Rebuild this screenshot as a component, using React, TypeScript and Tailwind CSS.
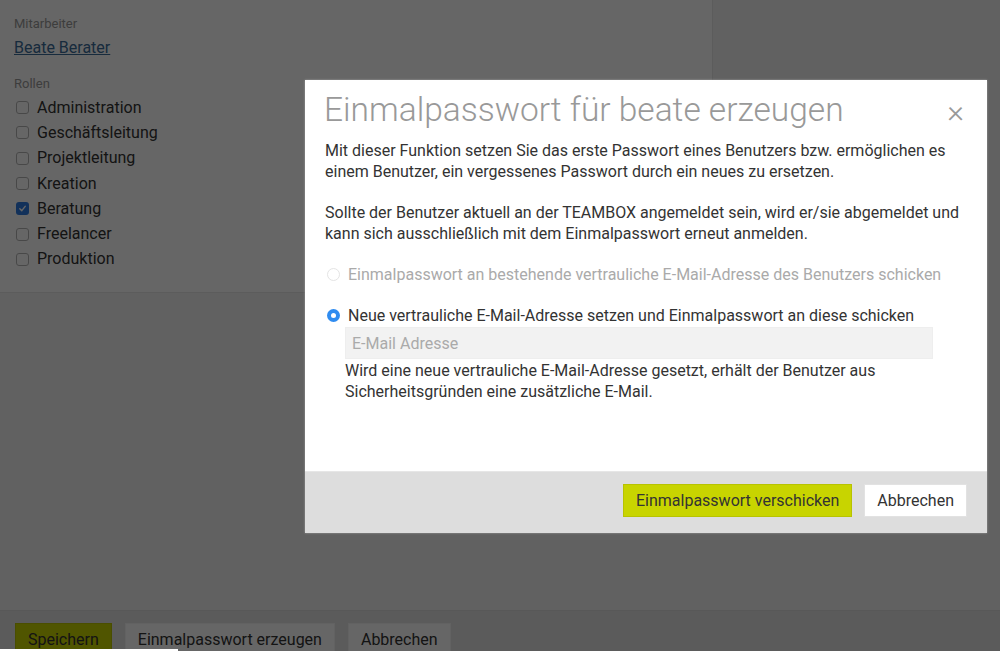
import React from "react";

const roles = [
  { name: "Administration", checked: false },
  { name: "Geschäftsleitung", checked: false },
  { name: "Projektleitung", checked: false },
  { name: "Kreation", checked: false },
  { name: "Beratung", checked: true },
  { name: "Freelancer", checked: false },
  { name: "Produktion", checked: false },
];

function Checkbox({ checked }: { checked: boolean }) {
  if (checked) {
    return (
      <span className="flex h-[13px] w-[13px] items-center justify-center rounded-[3px] bg-[#2f7be0]">
        <svg width="9" height="9" viewBox="0 0 10 10">
          <path d="M2 5.2 L4.2 7.4 L8 2.6" fill="none" stroke="white" strokeWidth="1.6" strokeLinecap="round" strokeLinejoin="round" />
        </svg>
      </span>
    );
  }
  return <span className="h-[13px] w-[13px] rounded-[3px] border border-[#b5b5b5] bg-white" />;
}

export default function App() {
  return (
    <div className="relative h-[651px] w-[1000px] overflow-hidden bg-[#f2f2f2] font-['Roboto',sans-serif]">
      <div className="flex h-full flex-col">
        <div className="w-[713px] border-b border-r border-[#e6e6e6] bg-white px-[14px] pt-[15px] pb-[20px]">
          <div className="text-[13px] leading-[18px] text-[#999]">Mitarbeiter</div>
          <div className="mt-[4px] text-[16px] leading-[22px] text-[#3a6b98] underline">Beate Berater</div>
          <div className="mt-[16px] text-[13px] leading-[18px] text-[#999]">Rollen</div>
          <div className="mt-[2px] flex flex-col">
            {roles.map((r) => (
              <div key={r.name} className="flex h-[25.3px] items-center gap-[8px] pl-[2px]">
                <Checkbox checked={r.checked} />
                <span className="text-[16px] text-[#333]">{r.name}</span>
              </div>
            ))}
          </div>
        </div>
        <div className="flex-1" />
        <div className="flex h-[41px] gap-[13px] border-t border-[#dcdcdc] bg-[#e4e4e4] px-[15px] pt-[12px]">
          <div className="flex h-[34px] items-center border border-[#b9c400] bg-[#c8d400] px-[12px] text-[16px] text-[#333]">Speichern</div>
          <div className="flex h-[34px] items-center border border-[#f5f5f5] bg-white px-[12px] text-[16px] text-[#333]">Einmalpasswort erzeugen</div>
          <div className="flex h-[34px] items-center border border-[#f5f5f5] bg-white px-[12px] text-[16px] text-[#333]">Abbrechen</div>
        </div>
      </div>

      <div className="absolute inset-0 bg-black/60" />
      <div className="absolute bottom-0 left-0 h-[2px] w-[178px] bg-white" />

      <div className="absolute left-[305px] top-[80px] w-[682px] bg-white shadow-[0_0_2px_rgba(255,255,255,0.4)]">
        <div className="flex items-start justify-between pl-[19px] pr-[23px] pt-[11px]">
          <h2 className="text-[33.5px] font-light leading-[38px] text-[#999]">Einmalpasswort für beate erzeugen</h2>
          <span className="mt-[5px] text-[32px] font-light leading-[30px] text-[#999]">×</span>
        </div>
        <div className="px-[20px] pt-[11px] pb-[69px] text-[16px] leading-[21px] text-[#333]">
          <p>
            Mit dieser Funktion setzen Sie das erste Passwort eines Benutzers bzw. ermöglichen es einem Benutzer, ein
            vergessenes Passwort durch ein neues zu ersetzen.
          </p>
          <p className="mt-[20px]">
            Sollte der Benutzer aktuell an der TEAMBOX angemeldet sein, wird er/sie abgemeldet und kann sich
            ausschließlich mit dem Einmalpasswort erneut anmelden.
          </p>
          <div className="mt-[20px] flex items-center gap-[8px] pl-[2px] text-[#aaa]">
            <span className="h-[13px] w-[13px] rounded-full border border-[#e4e4e4] bg-white" />
            <span>Einmalpasswort an bestehende vertrauliche E-Mail-Adresse des Benutzers schicken</span>
          </div>
          <div className="mt-[20px] flex items-center gap-[8px] pl-[2px]">
            <span className="flex h-[13px] w-[13px] items-center justify-center rounded-full bg-[#2f8cf0]">
              <span className="h-[5px] w-[5px] rounded-full bg-white" />
            </span>
            <span>Neue vertrauliche E-Mail-Adresse setzen und Einmalpasswort an diese schicken</span>
          </div>
          <div className="ml-[20px] mt-[1px] w-[588px]">
            <div className="flex h-[32px] items-center border border-[#eeeeee] bg-[#f2f2f2] px-[6px] text-[16px] text-[#aaa]">
              E-Mail Adresse
            </div>
            <p className="mt-[1px]">
              Wird eine neue vertrauliche E-Mail-Adresse gesetzt, erhält der Benutzer aus Sicherheitsgründen eine
              zusätzliche E-Mail.
            </p>
          </div>
        </div>
        <div className="flex h-[62px] justify-end gap-[12px] border-t border-[#e6e6e6] bg-[#dddddd] px-[20px] pt-[12px]">
          <div className="flex h-[33px] items-center border border-[#b8c300] bg-[#c8d400] px-[12px] text-[16px] text-[#333]">
            Einmalpasswort verschicken
          </div>
          <div className="flex h-[33px] items-center border border-[#e2e2e2] bg-white px-[12px] text-[16px] text-[#333]">
            Abbrechen
          </div>
        </div>
      </div>
    </div>
  );
}
